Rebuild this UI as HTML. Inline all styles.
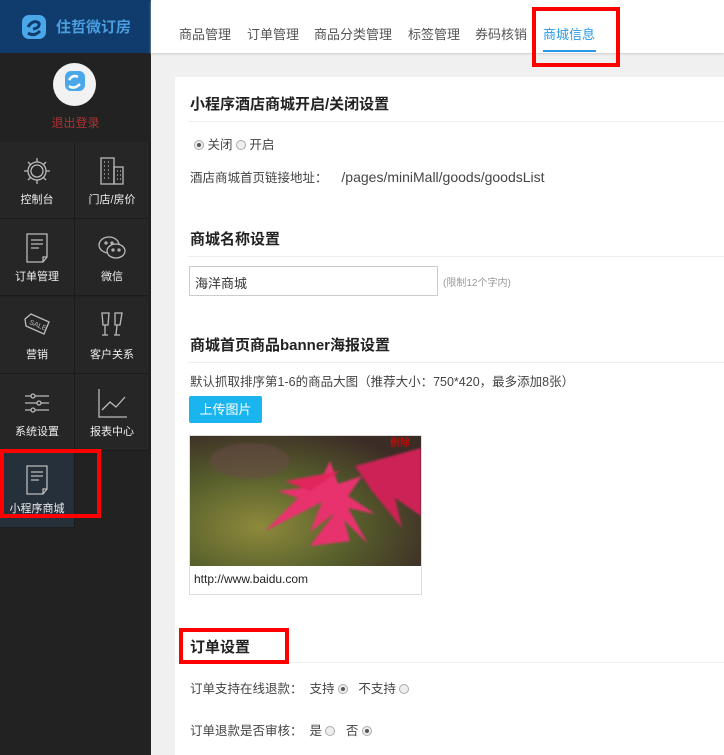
<!DOCTYPE html>
<html><head><meta charset="utf-8"><style>
*{margin:0;padding:0;box-sizing:border-box}
html,body{width:724px;height:755px;overflow:hidden}
body{background:#f0f0f0;font-family:"Liberation Sans","Noto Sans CJK SC",sans-serif;position:relative;color:#333}
.side{position:absolute;left:0;top:0;width:151px;height:755px;background:#222}
.logo{height:53px;background:#0f3c6c;display:flex;align-items:center;padding-left:20px;color:#4a9ee0;font-size:15px;font-weight:bold}
.avatar{position:absolute;left:53px;top:63px;width:43px;height:43px;border-radius:50%;background:#f2f2f2}
.logout{position:absolute;top:114px;left:0;width:151px;text-align:center;color:#a33;font-size:12px}
.cell{position:absolute;width:75px;height:77px;background:#262626;border-right:1px solid #1c1c1c;border-bottom:1px solid #1c1c1c;color:#eee;font-size:11px;text-align:center}
.cell svg{position:absolute;left:50%;margin-left:-15px;top:14px}
.cell span{position:absolute;left:0;right:0;top:49px}
.top{position:absolute;left:151px;top:0;right:0;height:53px;background:#fff;box-shadow:0 1px 2px #ccc}
.top a{position:absolute;top:24px;font-size:13px;color:#555}
.card{position:absolute;left:175px;top:77px;width:560px;height:680px;background:#fff}
.h{position:absolute;left:15px;font-size:15px;font-weight:bold;color:#222}
.hr{position:absolute;left:13px;right:0;height:1px;background:#eee}
.t{position:absolute;font-size:12.5px;color:#444;white-space:nowrap}
.r{display:inline-block;width:10px;height:10px;border-radius:50%;border:1px solid #aaa;background:#eee;vertical-align:-1px;position:relative}
.r.on::after{content:"";position:absolute;left:2px;top:2px;width:4px;height:4px;border-radius:50%;background:#555}
.box{position:absolute;border:4px solid #f00}
</style></head><body>
<div class="side">
 <div class="logo"><svg width="28" height="28" viewBox="0 0 28 28"><rect x="2" y="2" width="24" height="24" rx="7" fill="#4aa8e8"/><path d="M8 20 Q14 24 20 18 M8 14 Q13 6 19 10 Q20 15 13 16" stroke="#0f3c6c" stroke-width="3" fill="none"/></svg><span style="margin-left:8px">住哲微订房</span></div>
 <div class="avatar"><svg width="43" height="43" viewBox="0 0 43 43"><rect x="12" y="8" width="20" height="20" rx="6" fill="#4aa8e8"/><path d="M16 23 Q21 27 27 21 M16 17 Q20 11 25 14" stroke="#fff" stroke-width="2.5" fill="none"/></svg></div>
 <div class="logout">退出登录</div>
 <div class="cell" style="left:0;top:142px"><svg width="30" height="30" viewBox="0 0 30 30" fill="none" stroke="#bbb" stroke-width="1.3"><circle cx="15" cy="15" r="9"/><circle cx="15" cy="15" r="6"/><path d="M15 2v4M15 24v4M2 15h4M24 15h4M6 6l3 3M21 21l3 3M6 24l3-3M21 9l3-3"/></svg><span>控制台</span></div>
 <div class="cell" style="left:75px;top:142px"><svg width="30" height="30" viewBox="0 0 30 30" fill="none" stroke="#bbb" stroke-width="1.3"><rect x="4" y="2" width="13" height="26"/><rect x="17" y="11" width="9" height="17"/><path d="M7 6h1M11 6h1M7 10h1M11 10h1M7 14h1M11 14h1M7 18h1M11 18h1M7 22h1M11 22h1M20 15h1M23 15h1M20 19h1M23 19h1M20 23h1M23 23h1"/></svg><span>门店/房价</span></div>
 <div class="cell" style="left:0;top:219px"><svg width="30" height="30" viewBox="0 0 30 30" fill="none" stroke="#bbb" stroke-width="1.3"><path d="M5 1h20v23l-4 5H5z M21 29v-5h4M9 7h12M9 11h12M9 15h8"/></svg><span>订单管理</span></div>
 <div class="cell" style="left:75px;top:219px"><svg width="30" height="30" viewBox="0 0 30 30" fill="none" stroke="#bbb" stroke-width="1.3"><ellipse cx="12" cy="12" rx="10" ry="8"/><ellipse cx="19" cy="18" rx="9" ry="7" fill="#262626"/><circle cx="9" cy="10" r="1"/><circle cx="15" cy="10" r="1"/><circle cx="16" cy="17" r="1"/><circle cx="22" cy="17" r="1"/></svg><span>微信</span></div>
 <div class="cell" style="left:0;top:297px"><svg width="30" height="30" viewBox="0 0 30 30" fill="none" stroke="#bbb" stroke-width="1.3"><path d="M3 8l6-5 18 8-5 12-18-8z"/><text x="7" y="16" font-size="7" fill="#bbb" stroke="none" transform="rotate(22 15 14)">SALE</text></svg><span>营销</span></div>
 <div class="cell" style="left:75px;top:297px"><svg width="30" height="30" viewBox="0 0 30 30" fill="none" stroke="#bbb" stroke-width="1.3"><path d="M5 2h7l-1 12h-5zM8 14v10M5 24h6M18 2h7l-2 12h-5zM20 14l-1 10M17 24h6"/></svg><span>客户关系</span></div>
 <div class="cell" style="left:0;top:374px"><svg width="30" height="30" viewBox="0 0 30 30" fill="none" stroke="#bbb" stroke-width="1.3"><path d="M3 8h6M13 8h14M3 15h12M19 15h8M3 22h6M13 22h14"/><circle cx="11" cy="8" r="2"/><circle cx="17" cy="15" r="2"/><circle cx="11" cy="22" r="2"/></svg><span>系统设置</span></div>
 <div class="cell" style="left:75px;top:374px"><svg width="30" height="30" viewBox="0 0 30 30" fill="none" stroke="#bbb" stroke-width="1.3"><path d="M2 1v28h28M5 22l8-8 6 5 9-10"/></svg><span>报表中心</span></div>
 <div class="cell" style="left:0;top:451px;background:#25303a"><svg width="30" height="30" viewBox="0 0 30 30" fill="none" stroke="#bbb" stroke-width="1.3"><path d="M5 1h20v23l-4 5H5z M21 29v-5h4M9 7h12M9 11h12M9 15h8"/></svg><span>小程序商城</span></div>
</div>
<div class="box" style="left:0;top:449px;width:101px;height:69px"></div>
<div class="top">
 <a style="left:28px">商品管理</a><a style="left:96px">订单管理</a><a style="left:163px">商品分类管理</a><a style="left:257px">标签管理</a><a style="left:324px">券码核销</a>
 <a style="left:392px;color:#2a9ae6">商城信息</a>
 <div style="position:absolute;left:392px;top:50px;width:53px;height:2px;background:#2a9ae6"></div>
</div>
<div class="box" style="left:532px;top:7px;width:88px;height:60px"></div>
<div class="card">
 <div class="h" style="top:16px">小程序酒店商城开启/关闭设置</div>
 <div class="hr" style="top:44px"></div>
 <div class="t" style="left:19px;top:57px"><i class="r on"></i> 关闭 <i class="r"></i> 开启</div>
 <div class="t" style="left:15px;top:90px">酒店商城首页链接地址：&nbsp;&nbsp;&nbsp; <span style="font-size:14px">/pages/miniMall/goods/goodsList</span></div>
 <div class="h" style="top:151px">商城名称设置</div>
 <div class="hr" style="top:179px"></div>
 <div style="position:absolute;left:14px;top:189px;width:249px;height:30px;border:1px solid #ccc;font-size:13px;padding:6px 5px">海洋商城</div>
 <div class="t" style="left:268px;top:197px;font-size:10px;color:#999">(限制12个字内)</div>
 <div class="h" style="top:257px">商城首页商品banner海报设置</div>
 <div class="hr" style="top:285px"></div>
 <div class="t" style="left:15px;top:294px">默认抓取排序第1-6的商品大图（推荐大小：750*420，最多添加8张）</div>
 <div style="position:absolute;left:14px;top:319px;width:73px;height:27px;background:#1ab5ee;color:#fff;font-size:13px;text-align:center;line-height:27px;border-radius:2px">上传图片</div>
 <div style="position:absolute;left:14px;top:358px;width:233px;height:160px;border:1px solid #ddd">
  <svg width="231" height="130" viewBox="0 0 231 130" style="display:block"><defs><radialGradient id="g" cx=".3" cy=".7" r=".8"><stop offset="0" stop-color="#8e8a3c"/><stop offset=".5" stop-color="#58602c"/><stop offset="1" stop-color="#3c2c26"/></radialGradient><filter id="b"><feGaussianBlur stdDeviation="1"/></filter></defs><rect width="231" height="130" fill="url(#g)"/><ellipse cx="60" cy="25" rx="40" ry="18" fill="#6a4a4a" opacity=".5" filter="url(#b)"/><g fill="#e8306e" filter="url(#b)"><path d="M75 95 L108 62 L88 55 L128 50 L140 25 L148 48 L172 40 L158 60 L185 78 L158 72 L178 108 L146 76 L120 96 L132 66 Z"/><path d="M120 110 L150 70 L160 105 Z"/><path d="M165 30 L231 12 L231 80 L205 62 L212 92 L182 55 Z" fill="#cc2456"/><path d="M95 45 L150 35 L120 55 Z" fill="#e0285a"/></g><text x="200" y="10" font-size="10" fill="#e00">删除</text></svg>
  <div style="font-size:12px;color:#222;padding:6px 4px">http://www.baidu.com</div>
 </div>
 <div class="h" style="top:559px">订单设置</div>
 <div class="hr" style="top:585px"></div>
 <div class="t" style="left:15px;top:601px">订单支持在线退款：&nbsp; 支持 <i class="r on"></i>&nbsp;&nbsp; 不支持 <i class="r"></i></div>
 <div class="t" style="left:15px;top:643px">订单退款是否审核：&nbsp; 是 <i class="r"></i>&nbsp;&nbsp; 否 <i class="r on"></i></div>
</div>
<div class="box" style="left:179px;top:628px;width:110px;height:36px"></div>
</body></html>
